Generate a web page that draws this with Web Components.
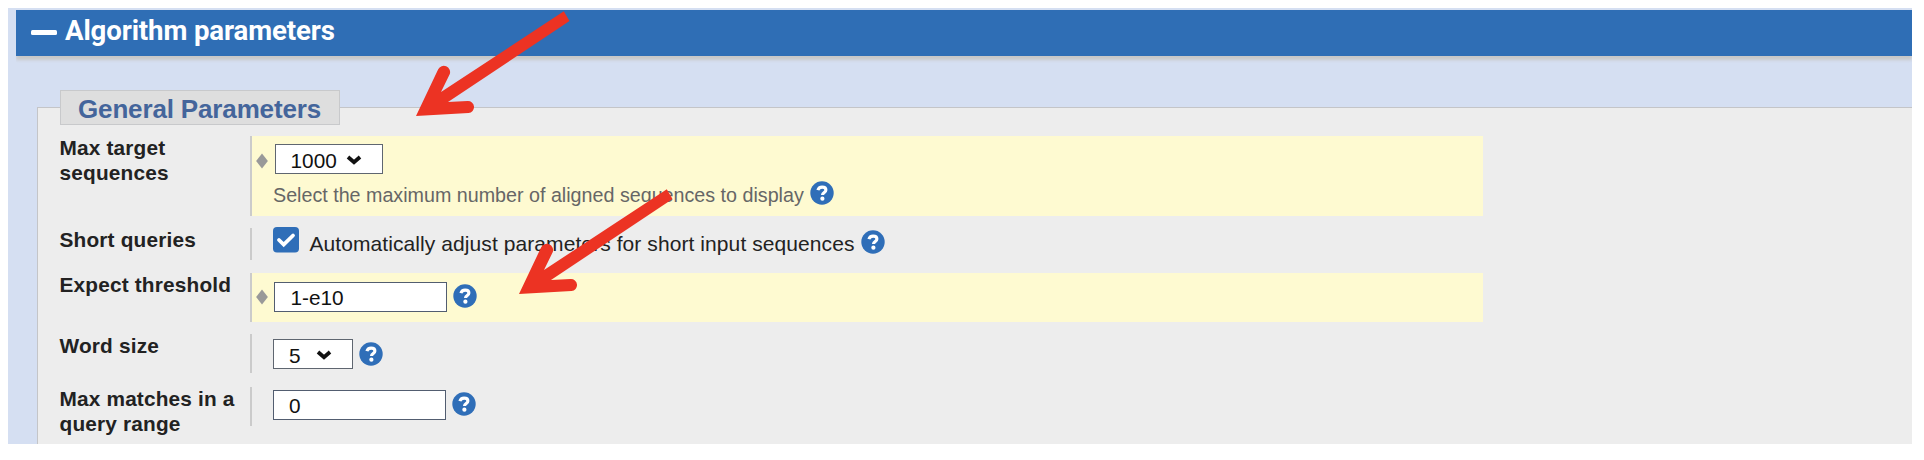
<!DOCTYPE html>
<html lang="en"><head><meta charset="utf-8"><title>Algorithm parameters</title>
<style>
html,body{margin:0;background:#fff}
body{width:1924px;height:460px;overflow:hidden;position:relative;font-family:"Liberation Sans",Arial,sans-serif}
</style></head><body>
<search-panel>
  <panel-header slot="header">Algorithm parameters</panel-header>
  <param-group caption="General Parameters">
    <param-row label="Max target sequences" changed style="height:80px">
      <choice-box style="--w:108.5px;--x:17px;--gap:9px;margin:8px 0 0 .5px">1000</choice-box>
      <hint-line style="--size:19.7px;--ls:0;--c:#666;--gap:6px;margin:6.5px 0 0 -1px">Select the maximum number of aligned sequences to display</hint-line>
    </param-row>
    <param-row label="Short queries" style="height:31.5px;margin-top:12px">
      <check-line>Automatically adjust parameters for short input sequences</check-line>
    </param-row>
    <param-row label="Expect threshold" changed style="height:48.5px;margin-top:13.5px">
      <text-box style="--x:17.5px;margin-top:9px">1-e10</text-box>
    </param-row>
    <param-row label="Word size" style="height:39px;margin-top:12.5px">
      <choice-box help style="--w:80px;--x:17.5px;--gap:15px;margin-top:5px">5</choice-box>
    </param-row>
    <param-row label="Max matches in a query range" style="height:39px;margin-top:14px">
      <text-box style="--x:17.5px;margin-top:3px">0</text-box>
    </param-row>
  </param-group>
</search-panel>
<pointer-arrow style="left:410px;top:5px"></pointer-arrow>
<pointer-arrow style="left:513.3px;top:183px"></pointer-arrow>
<script>
function define(name, html, init){
  const t=document.createElement('template'); t.innerHTML=html;
  customElements.define(name, class extends HTMLElement{
    constructor(){super();this.attachShadow({mode:'open'}).append(t.content.cloneNode(true));}
    connectedCallback(){ if(init) init(this,this.shadowRoot); }
  });
}
define('help-icon',`<style>:host{display:block;flex:none;width:24px;height:24px}svg{display:block}</style>
<svg width="24" height="24" viewBox="0 0 24 24"><circle cx="12" cy="12" r="11.7" fill="#2f6eb8"/>
<path d="M7.9 9.2C8.5 7 10 6.1 12.1 6.1C14.4 6.1 15.9 7.2 15.9 9C15.9 11.4 12.5 11.5 12.5 14" fill="none" stroke="#fff" stroke-width="3.1"/><circle cx="12.4" cy="17.7" r="2.1" fill="#fff"/></svg>`);
define('search-panel',`<style>:host{display:block;box-sizing:border-box;width:1904px;height:436px;background:#d5dff2;padding:2px 0 0 8px;overflow:hidden;transform:translate(8px,8px)}</style><slot name="header"></slot><slot></slot>`);
define('panel-header',`<style>:host{display:flex;height:46px;background:#2f6eb5;box-shadow:0 4px 3px #c8c8c8;clip-path:inset(0 0 -10px 0);color:#fff;font:bold 27.6px/32px Roboto,sans-serif;letter-spacing:-.12px;padding-left:15px;gap:8px}
i{width:26px;height:5px;border-radius:1.5px;background:#fff;margin-top:20px}span{margin-top:4.5px;white-space:nowrap}</style><i></i><span><slot></slot></span>`);
define('param-group',`<style>:host{display:block;margin:51px 0 0 21px;height:400px;border:1px solid #c4c5c8;border-width:1.5px 0 0 1.5px;background:#ededed}
.legend{width:278px;height:33px;margin:-18px 0 0 21.5px;border:1px solid #c8c9cb;background:#dedede;color:#44659b;font:bold 26px/36px "Liberation Sans",Arial,sans-serif;letter-spacing:-.15px;text-indent:17.5px;white-space:nowrap}
.rows{padding:11px 0 0 21.5px;width:1423px}</style><div class="legend"></div><div class="rows"><slot></slot></div>`,(h,r)=>r.querySelector('.legend').textContent=h.getAttribute('caption'));
define('param-row',`<style>:host{display:grid;grid-template-columns:190.5px 1fr;grid-template-rows:100%}
.label{font-weight:bold;font-size:20.8px;line-height:24.5px;letter-spacing:.18px;color:#222;width:186px}
.value{border-left:2px solid #cbcbcb;padding-left:20.5px;display:flow-root;position:relative}
:host([changed]) .value{background:#fefad1;padding-left:22px}
svg{display:none;position:absolute;left:4px}
:host([changed]) svg{display:block}</style><div class="label"></div><div class="value"><svg width="12" height="16" viewBox="0 0 12 16"><path d="M6 .4L11.9 8L6 15.6L.1 8Z" fill="#999"/></svg><slot></slot></div>`,(h,r)=>{r.querySelector('.label').textContent=h.getAttribute('label');r.querySelector('svg').style.top=h.getAttribute('label')[0]==='M'?'17px':'16px';});
define('choice-box',`<style>:host{display:flex;height:30px;gap:6px;align-items:center}
.box{box-sizing:border-box;width:var(--w);height:30px;border:1.5px solid #5f6670;background:#fff;color:#111;display:flex;padding-left:calc(var(--x) - 2px);gap:var(--gap);font-size:20.8px;line-height:31px}
.box svg{margin-top:9px} help-icon{display:none}:host([help]) help-icon{display:block}</style><div class="box"><span><slot></slot></span><svg width="16" height="12" viewBox="0 0 16 12"><path d="M2 3L8 8.2L14 3" fill="none" stroke="#111" stroke-width="3.8" stroke-linecap="butt" stroke-linejoin="miter"/></svg></div><help-icon></help-icon>`);
define('text-box',`<style>:host{display:flex;height:30px;gap:6px}
.box{box-sizing:border-box;width:173px;height:30px;border:1.5px solid #525d70;background:#fff;color:#111;padding-left:calc(var(--x) - 2px);font-size:20.8px;line-height:29px}help-icon{margin-top:2px}</style><div class="box"><slot></slot></div><help-icon></help-icon>`);
define('hint-line',`<style>:host{display:flex;height:24px;gap:var(--gap);font-size:var(--size);letter-spacing:var(--ls);color:var(--c);line-height:29px;white-space:nowrap}help-icon{margin-top:.7px}</style><span><slot></slot></span><help-icon></help-icon>`);
define('check-line',`<style>:host{display:flex;margin-top:-1px;height:27px;font-size:21px;letter-spacing:.08px;line-height:34px;color:#222;white-space:nowrap}svg{margin-right:11px;flex:none}help-icon{margin:3px 0 0 6px}</style>
<svg width="26" height="26" viewBox="0 0 26 26"><rect width="26" height="25.6" rx="4" fill="#2f6eb8"/><path d="M6 13L10.7 17.5L20 8.5" fill="none" stroke="#fff" stroke-width="3.8" stroke-linecap="round"/></svg><span><slot></slot></span><help-icon></help-icon>`);
define('pointer-arrow',`<style>:host{position:absolute;display:block}svg{display:block}</style><svg width="165" height="116" viewBox="410 5 165 116"><path d="M416 116L438.2 69.2A6.3 6.3 0 0 1 449.8 74L441 92L563.8 11.3L569.5 21L448 102L467.5 101A6 6 0 0 1 468.5 113Z" fill="#ec3323"/></svg>`);
</script></body></html>
